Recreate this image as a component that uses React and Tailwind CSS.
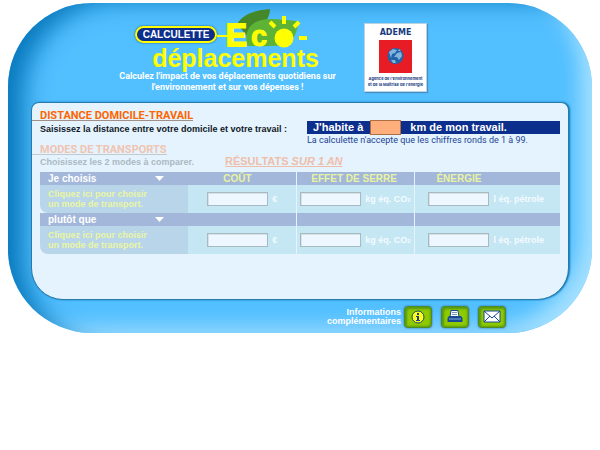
const compact = "font-['Roboto','Liberation_Sans',sans-serif]";

function EcoLogo() {
  return (
    <svg width="96" height="40" viewBox="0 0 96 40" role="img" aria-label="Eco-" className="block shrink-0 overflow-visible">
      <path d="M20 16C26 6 38 2 53 1C53 6 51 10 49 13L30 28Z" fill="#45882a" />
      <path d="M30 38C26 18 38 11 54 11C64 11 76 13 82 13C80 22 78 32 70 36C60 39 44 38 30 38Z" fill="#5db336" />
      <path d="M0 28H16" stroke="#ffff00" strokeWidth="2" />
      <text x="9" y="38" fontSize="31" fontWeight="700" fill="#ffff00" stroke="#ffff00" strokeWidth="2" fontFamily="Liberation Sans, sans-serif">E</text>
      <text x="34" y="38" fontSize="29" fontWeight="700" fill="#ffff00" stroke="#ffff00" strokeWidth="1" fontFamily="Liberation Sans, sans-serif">c</text>
      <circle cx="67" cy="30" r="9.500" fill="#ffff00" />
      <path d="M53 14L58 19M67 8V16M82 14L77 19M82 30H90" stroke="#ffff00" strokeWidth="4" />
    </svg>
  );
}

function Ademe() {
  return (
    <div className="mt-5 flex h-[69px] w-[63px] shrink-0 flex-col items-center border border-[#b9d3e6] bg-white pt-1 text-[#173a80] shadow-[1px_1px_1px_#4b8fc0]">
      <span className="font-['DejaVu_Sans',sans-serif] text-[8px] leading-[10px] font-bold">ADEME</span>
      <svg width="33" height="33" viewBox="0 0 33 33" className="mt-[2px] shrink-0" aria-hidden="true">
        <rect width="33" height="33" fill="#e81c24" />
        <circle cx="16.500" cy="16" r="8" fill="#2363aa" />
        <path d="M10 12L14 9L18 10L16 13L13 14L12 18ZM18 13L22 12L23 16L20 20L18 17L15 17ZM12 20L16 20L17 23L14 23ZM20 9L22 11L19 11Z" fill="#82b4dc" />
      </svg>
      <span className="mt-[3px] text-center font-['Inter',sans-serif] text-[4px] leading-[6px] font-bold whitespace-nowrap">
        Agence de l'Environnement<br />et de la Maîtrise de l'Energie
      </span>
    </div>
  );
}

const field = "h-[14px] w-[61px] shrink-0 border border-[#a9b9c0] bg-[#eef7ff] px-1 text-[9px] text-[#0c2c84] shadow-[inset_1px_1px_0_#d5e2e8]";

function Result({ label, unit, cell, pad }) {
  return (
    <td className={`bg-[#c5e6f3] p-0 ${cell}`}>
      <div className={`flex items-center gap-1 ${pad}`}>
        <input aria-label={label} readOnly className={field} />
        <span className="text-[9px] leading-[12px] whitespace-nowrap text-[#f4fbff]">{unit}</span>
      </div>
    </td>
  );
}

const divided = "border-l border-[#e4f3fd]";

function Mode({ name }) {
  return (
    <tr className="h-[28px]">
      <td className="rounded-bl-lg bg-[#b9d5ea] p-0 pl-2">
        <button type="button" className="block text-left text-[9px] leading-[10px] font-bold text-[#e9f5a0]">
          Cliquez ici pour choisir<br />un mode de transport.
        </button>
      </td>
      <Result label={`Coût, ${name}`} unit="€" cell="" pad="pl-[19px]" />
      <Result label={`Effet de serre, ${name}`} unit={<>kg éq. CO<span className="text-[6px]">2</span></>} cell={divided} pad="pl-[3px]" />
      <Result label={`Énergie, ${name}`} unit="l éq. pétrole" cell={divided} pad="pl-[13px]" />
    </tr>
  );
}

function Choice({ children }) {
  return (
    <button type="button" className="flex w-full items-center justify-between pr-6 pl-2 text-[10px] leading-[13px] font-bold text-white">
      {children}
      <svg width="9" height="5" viewBox="0 0 9 5" aria-hidden="true"><path d="M0 0H9L4.500 5Z" fill="white" /></svg>
    </button>
  );
}

function Tool({ label, children }) {
  return (
    <button type="button" aria-label={label} className="flex h-[22px] w-7 items-center justify-center rounded border border-[#4f8d22] bg-[#8fc900] shadow-[inset_2px_2px_2px_#559b16,inset_-1px_-1px_2px_#5c9c12,0_0_2px_#28649a]">
      {children}
    </button>
  );
}

export default function App() {
  return (
    <main className="px-2 pt-[3px] font-['Liberation_Sans',sans-serif]">
      <div className="rounded-[84px] bg-[#52bfff] px-[23px] shadow-[inset_26px_8px_24px_-10px_#0879bd,inset_-20px_-14px_20px_-8px_#a4e0ff]">
        <header className="flex h-[99px] pl-[84px]">
          <div className="mr-6 flex w-[225px] shrink-0 flex-col items-center pt-[5px]">
            <div className="flex w-full pl-[20px]">
              <span className="mt-[18px] flex h-[17px] w-[82px] shrink-0 items-center justify-center rounded-full border-2 border-[#ffff00] bg-[#0c2e8c] text-[10px] font-bold text-white shadow-[0_0_2px_#104c80]">
                CALCULETTE
              </span>
              <EcoLogo />
            </div>
            <h1 className="ml-4 text-[25px] leading-[20px] font-bold text-[#ffff00]">déplacements</h1>
            <p className={`${compact} pt-[3px] text-center text-[9px] leading-[11px] font-bold whitespace-nowrap text-white`}>
              Calculez l'impact de vos déplacements quotidiens sur<br />l'environnement et sur vos dépenses !
            </p>
          </div>
          <Ademe />
        </header>

        <section className="min-h-[198px] rounded-t-lg rounded-b-[32px] border border-[#287aa8] bg-[#e4f3fd] pt-2 pr-2 shadow-[1px_0_2px_#0875b5]">
          <div className="flex justify-between">
            <div>
              <h2 className={`${compact} w-fit border-b border-[#a08f87] pl-2 text-[11px] leading-[9px] font-bold text-[#ff6500]`}>DISTANCE DOMICILE-TRAVAIL</h2>
              <label htmlFor="distance" className="mt-[2px] block pl-2 text-[9px] leading-[12px] font-bold whitespace-nowrap text-[#111827]">
                Saisissez la distance entre votre domicile et votre travail :
              </label>
              <h2 className={`${compact} mt-[10px] w-fit border-b border-[#c4c9cc] pl-2 text-[11px] leading-[9px] font-bold text-[#f0c4b1]`}>MODES DE TRANSPORTS</h2>
              <p className="mt-[2px] pl-2 text-[9px] leading-[11px] font-bold text-[#abb9c3]">Choisissez les 2 modes à comparer.</p>
            </div>
            <div className="w-[253px] shrink-0 pt-[10px]">
              <div className="flex h-[13px] items-center bg-[#0c2e8c] pl-[6px] text-[11px] font-bold whitespace-nowrap text-white">
                J'habite à
                <input id="distance" className="mr-[9px] ml-[7px] h-[15px] w-[31px] border border-[#ad6f43] bg-[#ffaf7c] px-1 text-center text-black" />
                km de mon travail.
              </div>
              <p className={`${compact} text-[9px] leading-[13px] whitespace-nowrap text-[#1d4595]`}>La calculette n'accepte que les chiffres ronds de 1 à 99.</p>
            </div>
          </div>
          <h2 className="-mt-[13px] ml-[193px] w-fit text-[11px] leading-[12px] font-bold text-[#efbea9] underline">RÉSULTATS <i>SUR 1 AN</i></h2>

          <table className="mt-[5px] ml-2 w-[calc(100%-8px)] table-fixed border-separate border-spacing-0 font-bold">
            <colgroup>
              <col className="w-[28.5%]" /><col className="w-[20.8%]" /><col className="w-[22.7%]" /><col className="w-[28%]" />
            </colgroup>
            <tbody>
              <tr className="h-[13px] bg-[#a2b7da] text-left text-[10px] leading-[13px] text-[#e9f3a0]">
                <th className="p-0"><Choice>Je choisis</Choice></th>
                <th className="p-0 pl-[35px]">COÛT</th>
                <th className={`${divided} p-0 pl-[14px]`}>EFFET DE SERRE</th>
                <th className={`${divided} p-0 pl-[21px]`}>ÉNERGIE</th>
              </tr>
              <Mode name="mode choisi" />
              <tr className="h-[13px] bg-[#a2b7da]">
                <th className="p-0"><Choice>plutôt que</Choice></th>
                <td className="p-0" /><td className={`${divided} p-0`} /><td className={`${divided} p-0`} />
              </tr>
              <Mode name="mode comparé" />
            </tbody>
          </table>
        </section>

        <footer className="flex h-[33px] items-center justify-end gap-[9px] pr-[63px]">
          <p className="-mr-[6px] text-right text-[9px] leading-[9px] font-bold text-white">Informations<br />complémentaires</p>
          <Tool label="Informations">
            <svg width="14" height="14" viewBox="0 0 14 14"><circle cx="7" cy="7" r="6" fill="#ffff16" stroke="#174d70" /><path d="M6 3H8V5H6ZM5 6H8V10H9V11H5V10H6V7H5Z" fill="#173e9b" /></svg>
          </Tool>
          <Tool label="Imprimer">
            <svg width="16" height="13" viewBox="0 0 16 13"><path d="M4 .5H11L12 7H3Z" fill="white" stroke="#174996" /><path d="M5 2.500H10M5 4.500H10" stroke="#7799bd" /><path d="M2 6H14L15.500 8V12H.5V8Z" fill="#174996" /><path d="M2 9H14" stroke="#81add5" /></svg>
          </Tool>
          <Tool label="Envoyer par courriel">
            <svg width="18" height="13" viewBox="0 0 18 13"><path d="M1 1H17V12H1Z" fill="white" stroke="#174996" /><path d="M1 1L9 8L17 1M1 12L7 6M17 12L11 6" fill="none" stroke="#174996" /></svg>
          </Tool>
        </footer>
      </div>
    </main>
  );
}
